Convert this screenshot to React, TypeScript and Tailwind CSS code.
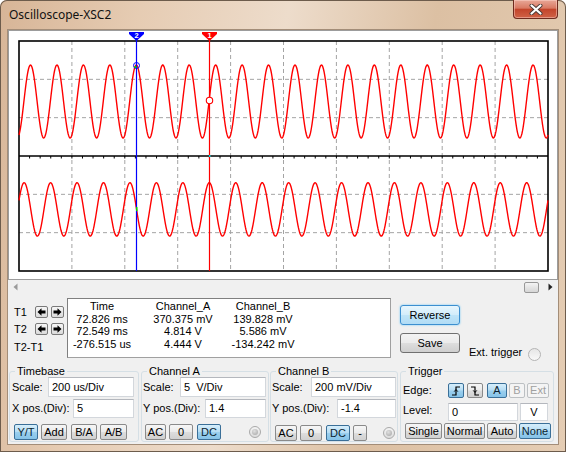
import React from "react";

type Tone = "normal" | "active" | "disabled";

const toneClass: Record<Tone, string> = {
  normal:
    "border-[#8a8a8a] bg-[linear-gradient(#f6f6f6,#ebebeb_48%,#dddddd_52%,#d0d0d0)] text-black",
  active:
    "border-[#3a6f98] bg-[linear-gradient(#d6eefb,#b6ddf4_48%,#9bcfee_52%,#86c3e8)] text-[#0b1f30]",
  disabled: "border-[#bcc0c3] bg-[#f4f4f4] text-[#a0a0a0]",
};

function Btn({
  label,
  w,
  tone = "normal",
  extra = "",
}: {
  label: React.ReactNode;
  w: string;
  tone?: Tone;
  extra?: string;
}) {
  return (
    <button
      type="button"
      className={`${w} ${extra} h-full flex items-center justify-center rounded-[2px] border leading-none ${toneClass[tone]}`}
    >
      {label}
    </button>
  );
}

function Field({ value, w, extra = "" }: { value: string; w: string; extra?: string }) {
  return (
    <div
      className={`${w} ${extra} h-full bg-white border border-[#d3d7dc] border-t-[#b4b7bd] flex items-center pl-[3px] whitespace-pre`}
    >
      {value}
    </div>
  );
}

function Radio({ dot = true, extra = "" }: { dot?: boolean; extra?: string }) {
  return (
    <div
      className={`${extra} w-[12px] h-[12px] rounded-full border border-[#a9a9a9] bg-[linear-gradient(#f4f4f4,#dcdcdc)] flex items-center justify-center`}
    >
      {dot && <div className="w-[6px] h-[6px] rounded-full bg-[radial-gradient(circle_at_40%_35%,#e0e0e0,#a4a4a4)]" />}
    </div>
  );
}

function ArrowBtn({ dir }: { dir: "l" | "r" }) {
  return (
    <div className="w-[13px] h-[12px] rounded-[2px] border border-[#7a7a7a] bg-[linear-gradient(#f6f6f6,#dadada)] flex items-center justify-center">
      <svg width="9" height="8" viewBox="0 0 9 8">
        <path
          d={dir === "l" ? "M0.5 4 L4.5 0.3 V2.5 H8.5 V5.5 H4.5 V7.7Z" : "M8.5 4 L4.5 0.3 V2.5 H0.5 V5.5 H4.5 V7.7Z"}
          fill="#000"
        />
      </svg>
    </div>
  );
}

function EdgeIcon({ rising }: { rising: boolean }) {
  return (
    <svg width="10" height="10" viewBox="0 0 10 10">
      <path
        d={rising ? "M1 9 H5 V1 H9" : "M1 1 H5 V9 H9"}
        fill="none"
        stroke="#000"
        strokeWidth="1.2"
      />
      <path
        d={rising ? "M3.2 5.6 L5 3.6 L6.8 5.6" : "M3.2 4.4 L5 6.4 L6.8 4.4"}
        fill="none"
        stroke="#000"
        strokeWidth="1"
      />
    </svg>
  );
}

function Screen() {
  const L = 19;
  const R = 548;
  const T = 41;
  const B = 271;
  const dx = (R - L) / 10;
  const dy = (B - T) / 6;
  const per = (R - L) / 20;
  const mid = T + dy * 3;

  const a: string[] = [];
  const b: string[] = [];
  for (let x = L; x <= R; x += 0.5) {
    const ya = 101.5 - 36.5 * Math.cos((2 * Math.PI * (x - 136.3)) / per);
    const yb = 209.4 - 26.7 * Math.cos((2 * Math.PI * (x - 209.3)) / per);
    a.push(`${x},${ya.toFixed(2)}`);
    b.push(`${x},${yb.toFixed(2)}`);
  }

  const ticks: number[] = [];
  for (let i = 1; i < 50; i++) ticks.push(L + (i * (R - L)) / 50);

  return (
    <svg width="546" height="246" viewBox="10 32 546 246" className="block">
      <rect x="10" y="32" width="546" height="246" fill="#fff" />
      {[1, 2, 3, 4, 5, 6, 7, 8, 9].map((i) => (
        <line
          key={`v${i}`}
          x1={L + i * dx}
          x2={L + i * dx}
          y1={T}
          y2={B}
          stroke="#a4a4a4"
          strokeDasharray="4 3"
        />
      ))}
      {[1, 2, 4, 5].map((j) => (
        <line
          key={`h${j}`}
          x1={L}
          x2={R}
          y1={T + j * dy}
          y2={T + j * dy}
          stroke="#a4a4a4"
          strokeDasharray="4 3"
        />
      ))}
      <line x1={L} x2={R} y1={mid} y2={mid} stroke="#000" strokeWidth="1.5" />
      {ticks.map((t) => (
        <line key={t} x1={t} x2={t} y1={mid} y2={mid + 2.5} stroke="#000" strokeWidth="1" />
      ))}
      <rect x={L} y={T} width={R - L} height={B - T} fill="none" stroke="#000" strokeWidth="1.6" />

      <polyline points={a.join(" ")} fill="none" stroke="#ff0000" strokeWidth="1.4" />
      <polyline points={b.join(" ")} fill="none" stroke="#ff0000" strokeWidth="1.4" />

      <line x1="136.5" x2="136.5" y1="36" y2={B} stroke="#0000ff" strokeWidth="1.2" />
      <line x1="209.5" x2="209.5" y1="36" y2={B} stroke="#ff0000" strokeWidth="1.2" />

      <polygon points="129,32 144,32 144,34 136.5,41 129,34" fill="#0000ff" />
      <text x="136.5" y="38" fontSize="7.5" fontWeight="700" fill="#fff" textAnchor="middle" fontFamily="Liberation Sans, Arial, sans-serif">
        2
      </text>
      <polygon points="202,32 217,32 217,34 209.5,41 202,34" fill="#ff0000" />
      <text x="209.5" y="38" fontSize="7.5" fontWeight="700" fill="#fff" textAnchor="middle" fontFamily="Liberation Sans, Arial, sans-serif">
        1
      </text>

      <circle cx="136.5" cy="65.5" r="3" fill="none" stroke="#0000ff" strokeWidth="1" />
      <rect x="134.5" y="66" width="2" height="2" fill="#00d000" />
      <circle cx="209.5" cy="100.5" r="3.2" fill="#fff" stroke="#ff0000" strokeWidth="1.1" />
      <rect x="136" y="207" width="1.5" height="4" fill="#00e000" />
      <rect x="209" y="155" width="1.5" height="2" fill="#00e0e0" />
    </svg>
  );
}

export default function App() {
  return (
    <div className="w-[566px] h-[452px] flex flex-col overflow-hidden rounded-t-[7px] bg-[linear-gradient(100deg,#d7b597_0%,#e6ccb3_22%,#eddccb_45%,#dcc0a3_68%,#e5cdb4_100%)] shadow-[inset_0_0_0_1px_#6d5c4c] font-['Liberation_Sans',Arial,sans-serif] text-[11px] text-black">
      {/* title bar */}
      <div className="h-[30px] flex items-start justify-between">
        <div className="pl-[9px] pt-[7px] text-[12px] leading-[16px] font-['Noto_Sans',sans-serif] text-[#111]">
          Oscilloscope-XSC2
        </div>
        <div className="mr-[8px] w-[45px] h-[19px] rounded-b-[4px] border border-t-0 border-[#6e2b1e] bg-[linear-gradient(#e8a797,#d97a63_45%,#c3452b_52%,#d06246)] shadow-[inset_0_0_0_1px_rgba(255,220,210,0.45)] flex items-center justify-center">
          <svg width="14" height="11" viewBox="0 0 14 11">
            <path d="M2.5 1.5 L11.5 9.5 M11.5 1.5 L2.5 9.5" stroke="#4a3a36" strokeWidth="4" strokeLinecap="round" />
            <path d="M2.5 1.5 L11.5 9.5 M11.5 1.5 L2.5 9.5" stroke="#fff" strokeWidth="2.2" strokeLinecap="round" />
          </svg>
        </div>
      </div>

      {/* client area */}
      <div className="mx-[8px] h-[414px] flex flex-col bg-[#f0f0f0] shadow-[0_0_0_1px_#a38d78]">
        {/* scope screen */}
        <div className="h-[250px] border border-[#9c9c9c] p-[1px] bg-white">
          <Screen />
        </div>

        {/* scrollbar */}
        <div className="h-[14px] flex items-center">
          <svg className="ml-[5px]" width="5" height="8" viewBox="0 0 5 8">
            <path d="M4.5 0.5 L0.5 4 L4.5 7.5Z" fill="#9a9a9a" />
          </svg>
          <div className="ml-auto w-[15px] h-[11px] rounded-[2px] border border-[#989898] bg-[linear-gradient(#f4f4f4,#e4e4e4_50%,#d6d6d6)]" />
          <svg className="ml-[9px] mr-[5px]" width="5" height="8" viewBox="0 0 5 8">
            <path d="M0.5 0.5 L4.5 4 L0.5 7.5Z" fill="#222" />
          </svg>
        </div>

        {/* cursor readout */}
        <div className="h-[68px] flex items-start">
          <div className="w-[59px] pt-[12px] pl-[6px] flex flex-col">
            <div className="h-[12px] flex items-center">
              <span className="w-[21px] leading-none">T1</span>
              <ArrowBtn dir="l" />
              <div className="ml-[3px]">
                <ArrowBtn dir="r" />
              </div>
            </div>
            <div className="mt-[5px] h-[12px] flex items-center">
              <span className="w-[21px] leading-none">T2</span>
              <ArrowBtn dir="l" />
              <div className="ml-[3px]">
                <ArrowBtn dir="r" />
              </div>
            </div>
            <div className="mt-[6px] h-[13px] leading-[13px]">T2-T1</div>
          </div>

          <div className="mt-[4px] w-[324px] h-[60px] bg-white border border-[#a0a0a0] border-t-[#7f7f7f] border-l-[#7f7f7f] pt-[1px]">
            <div className="grid grid-cols-[68px_94px_66px] text-center leading-[12.7px]">
              <div>Time</div>
              <div>Channel_A</div>
              <div>Channel_B</div>
              <div>72.826 ms</div>
              <div>370.375 mV</div>
              <div>139.828 mV</div>
              <div>72.549 ms</div>
              <div>4.814 V</div>
              <div>5.586 mV</div>
              <div>-276.515 us</div>
              <div>4.444 V</div>
              <div>-134.242 mV</div>
            </div>
          </div>

          <div className="ml-[9px] flex flex-col">
            <button
              type="button"
              className="mt-[11px] w-[60px] h-[20px] rounded-[3px] border border-[#3c8fd0] bg-[linear-gradient(#e8f6fd,#d3edfb_48%,#bfe4f8_52%,#b1dcf5)] shadow-[0_0_2px_#5fc3f5] leading-none"
            >
              Reverse
            </button>
            <button
              type="button"
              className="mt-[8px] w-[60px] h-[20px] rounded-[3px] border border-[#707070] bg-[linear-gradient(#f3f3f3,#ebebeb_48%,#dddddd_52%,#cfcfcf)] leading-none"
            >
              Save
            </button>
          </div>

          <div className="ml-[9px] mt-[52px] h-[13px] flex items-center">
            <span className="leading-[13px]">Ext. trigger</span>
            <div className="ml-[6px] mt-[3px] w-[13px] h-[13px] rounded-full border border-[#b4b4b4] bg-[linear-gradient(#e6e6e6,#f8f8f8)]" />
          </div>
        </div>

        {/* control groups */}
        <div className="pt-[3px] flex items-start">
          {/* Timebase */}
          <fieldset className="ml-[1px] w-[130px] h-[77px] border border-[#d5dfe5] rounded-[3px] flex flex-col">
            <legend className="ml-[5px] px-[2px] leading-[13px]">Timebase</legend>
            <div className="-mt-[1px] h-[20px] pl-[2px] pr-[4px] flex items-center">
              <span>Scale:</span>
              <Field value="200 us/Div" w="w-[86px]" extra="ml-auto" />
            </div>
            <div className="mt-[2px] h-[19px] pl-[2px] pr-[4px] flex items-center">
              <span>X pos.(Div):</span>
              <Field value="5" w="w-[61px]" extra="ml-auto" />
            </div>
            <div className="mt-[6px] h-[16px] pl-[4px] flex items-center">
              <Btn label="Y/T" w="w-[24px]" tone="active" />
              <Btn label="Add" w="w-[26px]" extra="ml-[3px]" />
              <Btn label="B/A" w="w-[26px]" extra="ml-[4px]" />
              <Btn label="A/B" w="w-[27px]" extra="ml-[3px]" />
            </div>
          </fieldset>

          {/* Channel A */}
          <fieldset className="ml-[2px] w-[128px] h-[77px] border border-[#d5dfe5] rounded-[3px] flex flex-col">
            <legend className="ml-[5px] px-[2px] leading-[13px]">Channel A</legend>
            <div className="-mt-[1px] h-[20px] pl-[1px] pr-[2px] flex items-center">
              <span>Scale:</span>
              <Field value="5  V/Div" w="w-[86px]" extra="ml-auto" />
            </div>
            <div className="mt-[2px] h-[19px] pl-[1px] pr-[2px] flex items-center">
              <span>Y pos.(Div):</span>
              <Field value="1.4" w="w-[61px]" extra="ml-auto" />
            </div>
            <div className="mt-[6px] h-[16px] pl-[3px] pr-[7px] flex items-center">
              <Btn label="AC" w="w-[21px]" />
              <Btn label="0" w="w-[24px]" extra="ml-[3px]" />
              <Btn label="DC" w="w-[24px]" tone="active" extra="ml-[4px]" />
              <Radio extra="ml-auto" />
            </div>
          </fieldset>

          {/* Channel B */}
          <fieldset className="ml-[1px] w-[128px] h-[77px] border border-[#d5dfe5] rounded-[3px] flex flex-col">
            <legend className="ml-[5px] px-[2px] leading-[13px]">Channel B</legend>
            <div className="-mt-[1px] h-[20px] pl-[1px] pr-[1px] flex items-center">
              <span>Scale:</span>
              <Field value="200 mV/Div" w="w-[85px]" extra="ml-auto" />
            </div>
            <div className="mt-[2px] h-[19px] pl-[1px] pr-[1px] flex items-center">
              <span>Y pos.(Div):</span>
              <Field value="-1.4" w="w-[59px]" extra="ml-auto" />
            </div>
            <div className="mt-[7px] h-[16px] pl-[4px] pr-[2px] flex items-center">
              <Btn label="AC" w="w-[22px]" />
              <Btn label="0" w="w-[22px]" extra="ml-[3px]" />
              <Btn label="DC" w="w-[24px]" tone="active" extra="ml-[4px]" />
              <Btn label="-" w="w-[14px]" extra="ml-[3px]" />
              <Radio extra="ml-auto" />
            </div>
          </fieldset>

          {/* Trigger */}
          <fieldset className="ml-[2px] w-[154px] h-[77px] border border-[#d5dfe5] rounded-[3px] flex flex-col">
            <legend className="ml-[5px] px-[2px] leading-[13px]">Trigger</legend>
            <div className="mt-[5px] h-[15px] pl-[2px] flex items-center">
              <span className="w-[45px]">Edge:</span>
              <Btn label={<EdgeIcon rising />} w="w-[16px]" tone="active" />
              <Btn label={<EdgeIcon rising={false} />} w="w-[16px]" extra="ml-[3px]" />
              <Btn label="A" w="w-[20px]" tone="active" extra="ml-[4px]" />
              <Btn label="B" w="w-[16px]" tone="disabled" extra="ml-[2px]" />
              <Btn label="Ext" w="w-[22px]" tone="disabled" extra="ml-[2px]" />
            </div>
            <div className="mt-[5px] h-[18px] pl-[2px] flex items-center">
              <span className="w-[45px] -mt-[4px]">Level:</span>
              <Field value="0" w="w-[70px]" />
              <div className="ml-[2px] w-[28px] h-full bg-white border border-[#d3d7dc] border-t-[#b4b7bd] flex items-center justify-center">
                V
              </div>
            </div>
            <div className="mt-[2px] h-[16px] pl-[4px] flex items-center">
              <Btn label="Single" w="w-[37px]" />
              <Btn label="Normal" w="w-[41px]" extra="ml-[2px]" />
              <Btn label="Auto" w="w-[30px]" extra="ml-[2px]" />
              <Btn label="None" w="w-[32px]" tone="active" extra="ml-[2px]" />
            </div>
          </fieldset>
        </div>
      </div>
    </div>
  );
}
